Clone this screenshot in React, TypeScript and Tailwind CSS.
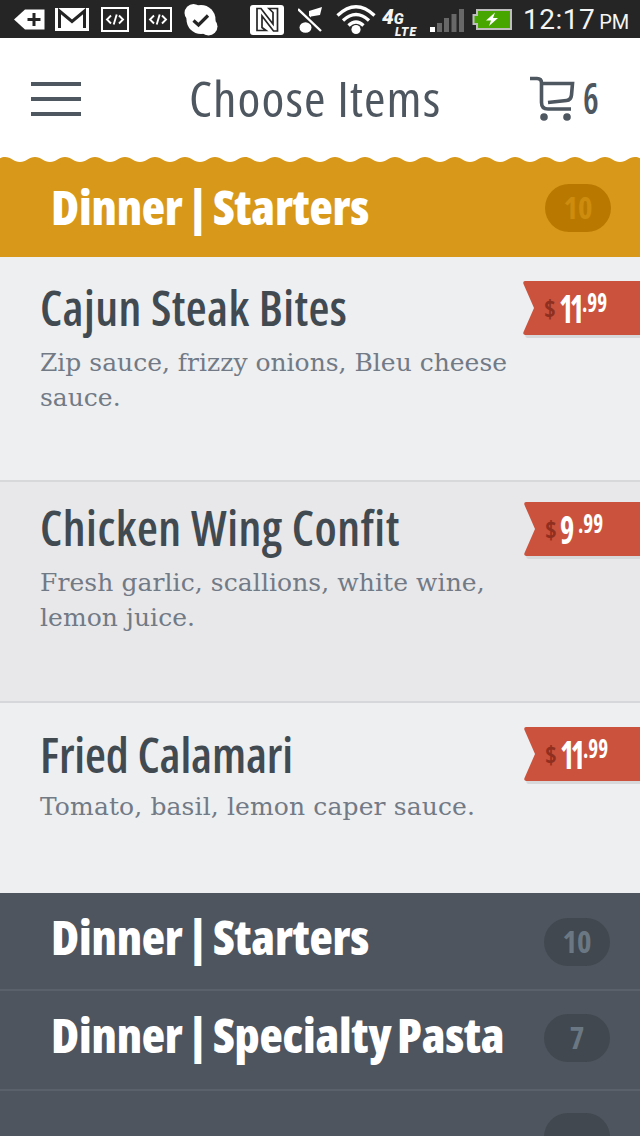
import type { ReactNode } from "react";

type MenuItem = {
  name: string;
  nameClass: string;
  description: string[];
  descriptionClass: string;
  dollars: string;
  dollarsClass: string;
  cents: string;
  rowClass: string;
  tagClass: string;
};

type Category = {
  name: string;
  count: string;
  rowClass: string;
  pillClass: string;
};

const items: MenuItem[] = [
  {
    name: "Cajun Steak Bites",
    nameClass: "tracking-[0.4px]",
    description: ["Zip sauce, frizzy onions, Bleu cheese", "sauce."],
    descriptionClass: "mt-[4px]",
    dollars: "11",
    dollarsClass: "w-[23px] tracking-[-4.5px]",
    cents: ".99",
    rowClass: "h-[225px] border-b-2 border-[#d6d8da] bg-[#eeeff1] pt-[20px]",
    tagClass: "mt-[4px] w-[117px]",
  },
  {
    name: "Chicken Wing Confit",
    nameClass: "tracking-[0.5px]",
    description: ["Fresh garlic, scallions, white wine,", "lemon juice."],
    descriptionClass: "mt-[4px] tracking-[0.08px]",
    dollars: "9",
    dollarsClass: "w-[18px]",
    cents: ".99",
    rowClass: "h-[221px] border-b-2 border-[#d6d7da] bg-[#e8e8ea] pt-[15px]",
    tagClass: "mt-[5px] w-[116px]",
  },
  {
    name: "Fried Calamari",
    nameClass: "tracking-[-0.1px]",
    description: ["Tomato, basil, lemon caper sauce."],
    descriptionClass: "mt-[1px] tracking-[0.13px]",
    dollars: "11",
    dollarsClass: "w-[23px] tracking-[-4.5px]",
    cents: ".99",
    rowClass: "h-[190px] bg-[#eeeff1] pt-[21px]",
    tagClass: "mt-[3px] w-[116px]",
  },
];

const categories: Category[] = [
  { name: "Dinner | Starters", count: "10", rowClass: "h-[98px] border-b-2 pt-[12px]", pillClass: "mt-[13px]" },
  { name: "Dinner | Specialty Pasta", count: "7", rowClass: "h-[100px] border-b-2 pt-[12px]", pillClass: "mt-[11px]" },
  { name: "", count: "", rowClass: "h-[45px] pt-[22px]", pillClass: "" },
];

function StatusIcon({ width, className, children }: { width: number; className: string; children: ReactNode }) {
  return (
    <svg width={width} height={38} viewBox={`0 0 ${width} 38`} className={`shrink-0 ${className}`} fill="#fff">
      {children}
    </svg>
  );
}

function CodeIcon({ className }: { className: string }) {
  return (
    <StatusIcon width={28} className={className}>
      <g fill="none" stroke="#fff">
        <rect x="1" y="8" width="26" height="23" strokeWidth="2" />
        <path d="M10 15.500 6 19.500l4 4M18 15.500l4 4-4 4M15.700 14.500l-3 10" strokeWidth="1.900" />
      </g>
    </StatusIcon>
  );
}

function StatusBar() {
  return (
    <div className="flex h-[38px] items-center overflow-hidden bg-[#252525] font-['Roboto',sans-serif] text-[#f4f4f4] [font-stretch:100%]">
      <StatusIcon width={31} className="ml-[14px]">
        <path d="M0 19.500 11 9.500h19.500v20H11z" />
        <path d="M20 13v13M13.500 19.500h13" stroke="#252525" strokeWidth="3" />
      </StatusIcon>
      <StatusIcon width={34} className="ml-[10px]">
        <path d="M0 8h34v23H0z" />
        <path d="M4.500 28V11L17 21.500 29.500 11v17" fill="none" stroke="#252525" strokeWidth="3" />
      </StatusIcon>
      <CodeIcon className="ml-[12px]" />
      <CodeIcon className="ml-[15px]" />
      <StatusIcon width={36} className="ml-[11px]">
        <circle cx="18" cy="19.500" r="14.500" />
        <circle cx="10.500" cy="13" r="9" />
        <circle cx="25.500" cy="26.500" r="9" />
        <path d="m10.500 20.500 5 4.500 9.500-9.500" fill="none" stroke="#252525" strokeWidth="3.200" />
      </StatusIcon>
      <StatusIcon width={34} className="ml-[31px]">
        <rect y="5" width="34" height="30" rx="3" />
        <path
          d="M7 30.500V8.500h4L23 24V12.500L19 8.500h8.500V31h-4L12 16v11.500l4 3z"
          fill="none"
          stroke="#252525"
          strokeWidth="1.700"
        />
      </StatusIcon>
      <StatusIcon width={26} className="ml-[14px]">
        <ellipse cx="7.500" cy="27.500" rx="6" ry="5.300" />
        <path d="M11 28V11l13-4-2 8-9 1.500V28z" />
        <path d="M0 9l23 22" stroke="#252525" strokeWidth="5.500" />
        <path d="M0 9l23 22" stroke="#fff" strokeWidth="2.400" />
      </StatusIcon>
      <StatusIcon width={40} className="ml-[12px]">
        <g fill="none" stroke="#fff" strokeWidth="3.300">
          <path d="M1.500 15.500Q20-2 38.500 15.500" />
          <path d="M7 20.500q13-12 26 0" />
          <path d="M12.500 25.500q7.500-7 15 0" />
        </g>
        <circle cx="20" cy="29.500" r="4.600" />
      </StatusIcon>
      <div className="mt-[7px] ml-[6px] flex w-[38px] shrink-0 flex-col font-black italic">
        <span className="flex items-baseline leading-[17px]">
          <span className="text-[21px]">4</span>
          <span className="text-[15px]">G</span>
        </span>
        <span className="pl-[13px] text-[12px] leading-[8px] tracking-[1px]">LTE</span>
      </div>
      <StatusIcon width={34} className="ml-[10px]">
        <path d="M0 27h5v5H0z" />
        <path d="M7 23h5v9H7zM14 18h5v14h-5zM21.500 14h5v18h-5zM29 9h5v23h-5z" fill="#686868" />
      </StatusIcon>
      <StatusIcon width={40} className="ml-[8px]">
        <path d="M5 10h34v19H5v-5H1.500v-9H5z" fill="#47a600" stroke="#bdbdbd" strokeWidth="2" />
        <path d="M23 12.500 14 20.500h5L17 26l9-8h-5z" />
      </StatusIcon>
      <div className="mt-[2px] ml-[11px] flex items-baseline whitespace-nowrap">
        <span className="text-[28px] leading-[36px] tracking-[0.5px]">12:17</span>
        <span className="ml-[4px] text-[20px]">PM</span>
      </div>
    </div>
  );
}

function Header() {
  return (
    <header className="flex h-[119px] items-start bg-white text-[#4e565f]">
      <button type="button" aria-label="Menu" className="mt-[44px] ml-[31px] flex w-[50px] flex-col gap-[11px]">
        <span className="h-1 bg-current" />
        <span className="h-1 bg-current" />
        <span className="h-1 bg-current" />
      </button>
      <h1 className="mt-[26px] ml-[108px] w-[341px] origin-left scale-x-[1.04] text-[50px] leading-[68px] font-normal tracking-[1px] whitespace-nowrap">
        Choose Items
      </h1>
      <svg width="46" height="46" viewBox="0 0 46 46" className="mt-[38px] shrink-0" fill="none" stroke="currentColor" strokeWidth="3.600">
        <path d="M0 2.500h7q4.500 0 4.500 4.500v19.500q0 6.500 6.500 6.500h23" />
        <path d="M12 7.500h30.500l-1 11.500q-.500 5-5 5.500L18 26.500" />
        <circle cx="14" cy="41" r="3.800" fill="currentColor" stroke="none" />
        <circle cx="37" cy="41" r="3.800" fill="currentColor" stroke="none" />
      </svg>
      <span className="mt-[35px] ml-[7px] inline-block origin-left scale-x-[0.8] text-[44px] leading-[48px] font-semibold">
        6
      </span>
    </header>
  );
}

function Wave() {
  // one scallop every 30px, crests at x = 5 + 30n
  let d = "M-25 0";
  for (let x = -25; x < 650; x += 30) {
    d += "c6 0 9 5 15 5s9-5 15-5";
  }
  return (
    <svg width="640" height="5" viewBox="0 0 640 5" className="block bg-[#d89819]">
      <path d={d + "z"} fill="#fff" />
    </svg>
  );
}

function Pill({ count, className }: { count: string; className: string }) {
  return (
    <span
      className={`flex h-[48px] w-[66px] shrink-0 items-center justify-center rounded-full pb-[2px] text-[31px] leading-[46px] font-bold ${className}`}
    >
      {count}
    </span>
  );
}

function CategoryTitle({ name }: { name: string }) {
  return (
    <h2 className="w-[494px] shrink-0 text-[48px] leading-[64px] font-extrabold tracking-[-0.2px] whitespace-nowrap [word-spacing:-3px]">
      {name}
    </h2>
  );
}

function PriceTag({ item }: { item: MenuItem }) {
  return (
    <div className={`relative h-[57px] shrink-0 ${item.tagClass}`}>
      <svg width="117" height="57" viewBox="0 0 117 57" className="absolute top-0 left-0">
        <path d="M2 53h115v4H4q-2-1-2-4z" fill="#d6d8da" />
        <path d="M2 0h115v54H2q-2.500-.500-1.500-3L11 27 .500 3Q-.500.500 2 0z" fill="#cb523c" />
      </svg>
      <div className="relative flex pl-[21px] whitespace-nowrap text-white">
        <span className="mt-[10px] w-[15px] text-[25px] leading-[34px] font-bold text-[#8f2f1f]">$</span>
        <span className={`origin-left scale-x-[0.78] text-[39px] leading-[53px] font-bold ${item.dollarsClass}`}>
          {item.dollars}
        </span>
        <span className="mt-[3px] origin-left scale-x-[0.78] text-[27px] leading-[36px] font-bold">{item.cents}</span>
      </div>
    </div>
  );
}

function ItemRow({ item }: { item: MenuItem }) {
  return (
    <li className={`flex justify-between pl-[40px] ${item.rowClass}`}>
      <div className="w-[480px]">
        <h3 className={`h-[64px] text-[48px] leading-[62px] font-semibold whitespace-nowrap text-[#424a51] ${item.nameClass}`}>
          {item.name}
        </h3>
        <p
          className={`font-['DejaVu_Serif',serif] text-[25px] leading-[35px] text-[#727a86] [font-stretch:100%] ${item.descriptionClass}`}
        >
          {item.description.map((line) => (
            <span key={line} className="block whitespace-nowrap">
              {line}
            </span>
          ))}
        </p>
      </div>
      <PriceTag item={item} />
    </li>
  );
}

export default function App() {
  return (
    <div className="h-[1136px] w-[640px] overflow-hidden bg-[#4e555e] font-['Open_Sans',sans-serif] [font-stretch:75%]">
      <StatusBar />
      <Header />
      <section>
        <Wave />
        <div className="flex h-[95px] bg-[#d89819] pt-[13px] pl-[51px] text-white">
          <CategoryTitle name="Dinner | Starters" />
          <Pill count="10" className="mt-[9px] bg-[#b97900] text-[#cd8c0e]" />
        </div>
        <ul>
          {items.map((item) => (
            <ItemRow key={item.name} item={item} />
          ))}
        </ul>
      </section>
      {categories.map((category) => (
        <div key={category.name} className={`flex border-[#5a616a] pl-[51px] text-white ${category.rowClass}`}>
          <CategoryTitle name={category.name} />
          <Pill count={category.count} className={`-ml-px bg-[#41484f] text-[#6b7883] ${category.pillClass}`} />
        </div>
      ))}
    </div>
  );
}
